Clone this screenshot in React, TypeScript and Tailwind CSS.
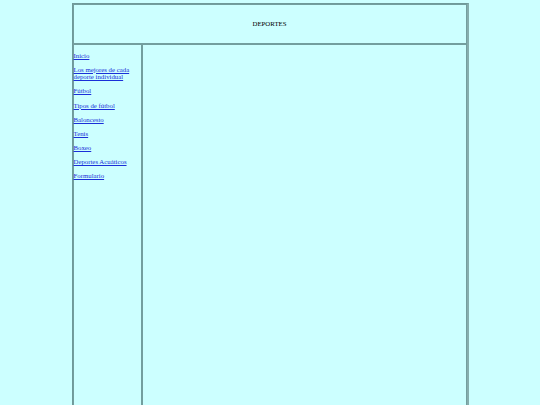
const links = [
  "Inicio",
  "Los mejores de cada deporte individual",
  "Fútbol",
  "Tipos de fútbol",
  "Baloncesto",
  "Tenis",
  "Boxeo",
  "Deportes Acuáticos",
  "Formulario",
];

export default function App() {
  return (
    <div className="min-h-[405px] bg-[#ccffff] pt-[3px] font-['Liberation_Serif',serif] text-[6.8px] leading-[7.6px] text-black">
      <div className="mx-auto flex w-[397px] flex-col border border-r-2 border-t-[#6f9999] border-l-[#6f9999] border-r-[#86adad] border-b-[#86adad]">
        <div className="flex h-[40px] items-center justify-center border border-[#739e9e]">
          DEPORTES
        </div>
        <div className="flex">
          <div className="h-[420px] w-[69px] border border-[#739e9e] pt-[0px]">
            {links.map((l) => (
              <p key={l} className="my-[6.55px]">
                <a href="#" className="text-[#1a2fd8] underline">
                  {l}
                </a>
              </p>
            ))}
          </div>
          <div className="h-[420px] flex-1 border border-[#739e9e]" />
        </div>
      </div>
    </div>
  );
}
